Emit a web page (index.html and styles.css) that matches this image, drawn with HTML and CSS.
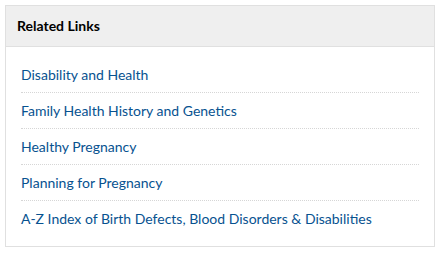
FILE: index.html
```html
<!DOCTYPE html>
<html lang="en">
<head>
    <meta charset="UTF-8">
    <title>Related Links</title>
    <link rel="stylesheet" href="styles.css">
</head>
<body>

<div class="card">
    <div class="card-header">Related Links</div>
    <ul class="links">
        <li><a href="#">Disability and Health</a></li>
        <li><a href="#">Family Health History and Genetics</a></li>
        <li><a href="#">Healthy Pregnancy</a></li>
        <li><a href="#">Planning for Pregnancy</a></li>
        <li><a href="#">A-Z Index of Birth Defects, Blood Disorders &amp; Disabilities</a></li>
    </ul>
</div>

</body>
</html>
```

FILE: styles.css
```css
body { font-family: Lato, "Open Sans", sans-serif; font-size: 14px; color: #000; background: #fff; margin: 5px; }
.card { border: 1px solid #e0e0e0; }
.card-header { background-color: #efefef; border-bottom: 1px solid #e0e0e0; padding: 0 11px; height: 40px; line-height: 40px; font-weight: bold; }
.links { list-style: none; margin: 0; padding: 10px 15px; }
.links li { padding: 8px 0; line-height: 19px; border-bottom: 1px dotted #d6d6d6; }
.links li:last-child { border-bottom: none; }
.links a { color: #075290; text-decoration: none; }
```
